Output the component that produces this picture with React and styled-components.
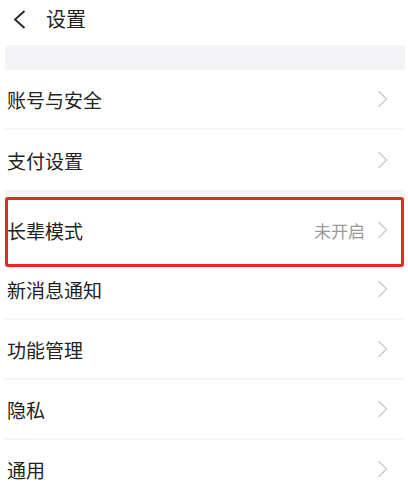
import React from 'react';
import styled, { createGlobalStyle } from 'styled-components';

const GlobalStyle = createGlobalStyle`
  html, body {
    margin: 0;
    padding: 0;
    background: #ffffff;
  }
  body {
    font-family: "Noto Sans CJK SC", "Noto Sans", sans-serif;
    color: #222222;
  }
`;

const Page = styled.div`
  width: 408px;
  height: 491px;
  overflow: hidden;
  background: #ffffff;
`;

const Header = styled.div`
  height: 45px;
  display: flex;
  align-items: center;
  padding: 0 0 7px 13px;
  box-sizing: border-box;
  gap: 20px;
`;

const BackButton = styled.button`
  background: none;
  border: none;
  padding: 0;
  width: 13px;
  height: 19px;
  display: flex;
  align-items: center;
  justify-content: center;
  cursor: pointer;
`;

const Title = styled.h1`
  margin: 0;
  font-size: 20px;
  font-weight: 400;
  color: #1e1e1e;
  line-height: 1;
`;

const List = styled.div`
  margin: 0 3px 0 5px;
`;

const Spacer = styled.div`
  height: ${props => props.size}px;
  background: #f4f4f6;
`;

const Row = styled.div`
  position: relative;
  height: 60px;
  display: flex;
  align-items: center;
  padding: 0 17px 0 2px;
  border-bottom: ${props => props.last ? 'none' : '2px solid #f5f5f5'};
  box-sizing: border-box;

  ${props => props.highlight && `
    border-bottom: none;
    &::after {
      content: '';
      position: absolute;
      left: 0;
      right: 1px;
      top: -3px;
      bottom: -7px;
      border: 3px solid #e52a24;
      border-radius: 3px;
      pointer-events: none;
    }
  `}
`;

const Label = styled.span`
  flex: 1;
  font-size: 19px;
  color: #222222;
  line-height: 1;
`;

const Value = styled.span`
  font-size: 17px;
  color: #9a9a9a;
  margin-right: 12px;
  line-height: 1;
`;

const Chevron = () => (
  <svg width="11" height="18" viewBox="0 0 11 18">
    <path d="M1.5 1 L9.5 9 L1.5 17" fill="none" stroke="#c9c9c9" strokeWidth="1.3" />
  </svg>
);

const BackIcon = () => (
  <svg width="13" height="19" viewBox="0 0 13 19">
    <path d="M11.5 1 L2 9.5 L11.5 18" fill="none" stroke="#222" strokeWidth="1.8" />
  </svg>
);

const sections = [
  [
    { label: '账号与安全' },
    { label: '支付设置' },
  ],
  [
    { label: '长辈模式', value: '未开启', highlight: true },
    { label: '新消息通知' },
    { label: '功能管理' },
    { label: '隐私' },
    { label: '通用' },
  ],
];

const App = () => {
  return (
    <Page>
      <GlobalStyle />
      <Header>
        <BackButton>
          <BackIcon />
        </BackButton>
        <Title>设置</Title>
      </Header>
      <List>
        {sections.map((items, si) => (
          <React.Fragment key={si}>
            <Spacer size={si === 0 ? 25 : 10} />
            {items.map((item, i) => (
              <Row
                key={item.label}
                highlight={item.highlight}
                last={i === items.length - 1 && si === 0}
              >
                <Label>{item.label}</Label>
                {item.value && <Value>{item.value}</Value>}
                <Chevron />
              </Row>
            ))}
          </React.Fragment>
        ))}
      </List>
    </Page>
  );
};

export default App;
